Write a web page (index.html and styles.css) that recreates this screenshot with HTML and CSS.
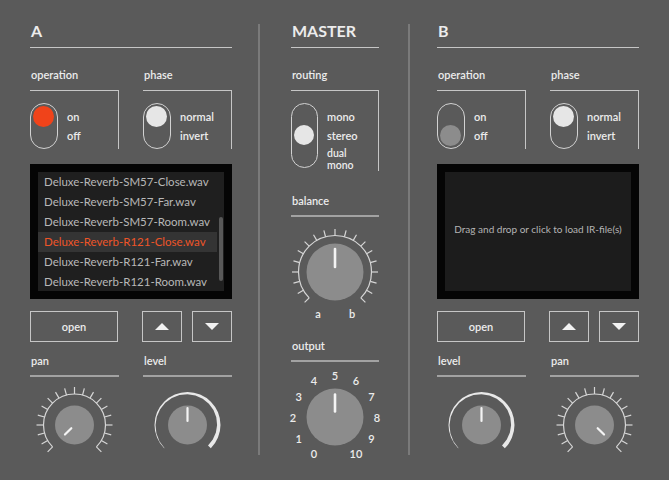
FILE: index.html
```html
<!DOCTYPE html>
<html lang="en">
<head>
  <meta charset="UTF-8" />
  <meta name="viewport" content="width=device-width, initial-scale=1.0" />
  <title>IR Loader</title>
  <link rel="stylesheet" href="styles.css">
</head>
<body>
  <div class="rack">

    <!-- channel A -->
    <section class="channel channel-a">
      <h2 class="title">A</h2>
      <div class="pair">
        <div class="group">
          <div class="label">operation</div>
          <div class="bracket">
            <div class="switch"><span class="dot dot-on"></span></div>
            <ul class="options"><li>on</li><li>off</li></ul>
          </div>
        </div>
        <div class="group">
          <div class="label">phase</div>
          <div class="bracket">
            <div class="switch"><span class="dot"></span></div>
            <ul class="options"><li>normal</li><li>invert</li></ul>
          </div>
        </div>
      </div>

      <div class="screen">
        <div class="screen-inner">
          <ul class="files">
            <li>Deluxe-Reverb-SM57-Close.wav</li>
            <li>Deluxe-Reverb-SM57-Far.wav</li>
            <li>Deluxe-Reverb-SM57-Room.wav</li>
            <li class="current">Deluxe-Reverb-R121-Close.wav</li>
            <li>Deluxe-Reverb-R121-Far.wav</li>
            <li>Deluxe-Reverb-R121-Room.wav</li>
          </ul>
          <div class="track"><div class="thumb"></div></div>
        </div>
      </div>

      <div class="pair buttons">
        <button class="btn open">open</button>
        <div class="arrows">
          <button class="btn arrow"><svg width="14" height="7" viewBox="0 0 14 7"><polygon points="7,0 14,7 0,7"/></svg></button>
          <button class="btn arrow"><svg width="14" height="7" viewBox="0 0 14 7"><polygon points="0,0 14,0 7,7"/></svg></button>
        </div>
      </div>

      <div class="pair">
        <div class="group">
          <div class="knob-label">pan</div>
          <svg class="knob" width="89" height="90" viewBox="-44.5 -45 89 90">
            <path class="scale" d="M -21.92 21.92 A 31 31 0 1 1 21.92 21.92"/>
            <g class="ticks">
              <line y1="-31" y2="-38" transform="rotate(-135)"/><line y1="-31" y2="-38" transform="rotate(-120)"/>
              <line y1="-31" y2="-38" transform="rotate(-105)"/><line y1="-31" y2="-38" transform="rotate(-90)"/>
              <line y1="-31" y2="-38" transform="rotate(-75)"/><line y1="-31" y2="-38" transform="rotate(-60)"/>
              <line y1="-31" y2="-38" transform="rotate(-45)"/><line y1="-31" y2="-38" transform="rotate(-30)"/>
              <line y1="-31" y2="-38" transform="rotate(-15)"/><line y1="-31" y2="-38"/>
              <line y1="-31" y2="-38" transform="rotate(15)"/><line y1="-31" y2="-38" transform="rotate(30)"/>
              <line y1="-31" y2="-38" transform="rotate(45)"/><line y1="-31" y2="-38" transform="rotate(60)"/>
              <line y1="-31" y2="-38" transform="rotate(75)"/><line y1="-31" y2="-38" transform="rotate(90)"/>
              <line y1="-31" y2="-38" transform="rotate(105)"/><line y1="-31" y2="-38" transform="rotate(120)"/>
              <line y1="-31" y2="-38" transform="rotate(135)"/>
            </g>
            <circle class="body" r="19.5"/>
            <line class="pointer" y1="-4.5" y2="-13.5" transform="rotate(-135)"/>
          </svg>
        </div>
        <div class="group">
          <div class="knob-label">level</div>
          <svg class="knob" width="89" height="90" viewBox="-44.5 -45 89 90">
            <path class="sweep" d="M -23.33 23.33 A 33 33 0 1 1 23.33 23.33 L 20.51 20.51 L 25.29 14.6 L 28.4 7.61 L 29.6 0 L 28.78 -7.71 L 25.98 -15 L 21.35 -21.35 L 15.2 -26.33 L 7.92 -29.56 L 0 -30.8 L -8.02 -29.94 L -15.6 -27.02 L -22.2 -22.2 L -27.37 -15.8 L -30.72 -8.23 L -32 0 L -31.1 8.33 L -28.06 16.2 L -23.05 23.05 Z"/>
            <circle class="body" r="19.5"/>
            <line class="pointer" y1="-4" y2="-17"/>
          </svg>
        </div>
      </div>
    </section>

    <div class="divider"></div>

    <!-- master -->
    <section class="master">
      <h2 class="title">MASTER</h2>
      <div class="label">routing</div>
      <div class="bracket">
        <div class="switch switch-tall"><span class="dot"></span></div>
        <ul class="options"><li>mono</li><li>stereo</li><li class="dual">dual<br>mono</li></ul>
      </div>

      <div class="knob-label knob-label-balance">balance</div>
      <svg class="knob knob-big" width="88" height="100" viewBox="-44 -50 88 100">
        <path class="scale" d="M -25.81 25.81 A 36.5 36.5 0 1 1 25.81 25.81"/>
        <g class="ticks">
          <line y1="-36.5" y2="-43" transform="rotate(-135)"/><line y1="-36.5" y2="-43" transform="rotate(-120)"/>
          <line y1="-36.5" y2="-43" transform="rotate(-105)"/><line y1="-36.5" y2="-43" transform="rotate(-90)"/>
          <line y1="-36.5" y2="-43" transform="rotate(-75)"/><line y1="-36.5" y2="-43" transform="rotate(-60)"/>
          <line y1="-36.5" y2="-43" transform="rotate(-45)"/><line y1="-36.5" y2="-43" transform="rotate(-30)"/>
          <line y1="-36.5" y2="-43" transform="rotate(-15)"/><line y1="-36.5" y2="-43"/>
          <line y1="-36.5" y2="-43" transform="rotate(15)"/><line y1="-36.5" y2="-43" transform="rotate(30)"/>
          <line y1="-36.5" y2="-43" transform="rotate(45)"/><line y1="-36.5" y2="-43" transform="rotate(60)"/>
          <line y1="-36.5" y2="-43" transform="rotate(75)"/><line y1="-36.5" y2="-43" transform="rotate(90)"/>
          <line y1="-36.5" y2="-43" transform="rotate(105)"/><line y1="-36.5" y2="-43" transform="rotate(120)"/>
          <line y1="-36.5" y2="-43" transform="rotate(135)"/>
        </g>
        <circle class="body" r="28.5"/>
        <line class="pointer pointer-thick" y1="-5" y2="-23"/>
        <text x="-17" y="41">a</text>
        <text x="17" y="41">b</text>
      </svg>

      <div class="knob-label knob-label-output">output</div>
      <svg class="knob knob-big" width="88" height="100" viewBox="-44 -50 88 100">
        <text x="-21" y="36.4">0</text>
        <text x="-36.4" y="21">1</text>
        <text x="-42" y="0">2</text>
        <text x="-36.4" y="-21">3</text>
        <text x="-21" y="-36.4">4</text>
        <text x="0" y="-42">5</text>
        <text x="21" y="-36.4">6</text>
        <text x="36.4" y="-21">7</text>
        <text x="42" y="0">8</text>
        <text x="36.4" y="21">9</text>
        <text x="21" y="36.4">10</text>
        <circle class="body" r="28.5"/>
        <line class="pointer pointer-thick" y1="-5.5" y2="-22.5"/>
      </svg>
    </section>

    <div class="divider divider-b"></div>

    <!-- channel B -->
    <section class="channel channel-b">
      <h2 class="title">B</h2>
      <div class="pair">
        <div class="group">
          <div class="label">operation</div>
          <div class="bracket">
            <div class="switch switch-off"><span class="dot dot-off"></span></div>
            <ul class="options"><li>on</li><li>off</li></ul>
          </div>
        </div>
        <div class="group">
          <div class="label">phase</div>
          <div class="bracket">
            <div class="switch"><span class="dot"></span></div>
            <ul class="options"><li>normal</li><li>invert</li></ul>
          </div>
        </div>
      </div>

      <div class="screen">
        <div class="screen-inner drop">Drag and drop or click to load IR-file(s)</div>
      </div>

      <div class="pair buttons">
        <button class="btn open">open</button>
        <div class="arrows">
          <button class="btn arrow"><svg width="14" height="7" viewBox="0 0 14 7"><polygon points="7,0 14,7 0,7"/></svg></button>
          <button class="btn arrow"><svg width="14" height="7" viewBox="0 0 14 7"><polygon points="0,0 14,0 7,7"/></svg></button>
        </div>
      </div>

      <div class="pair">
        <div class="group">
          <div class="knob-label">level</div>
          <svg class="knob" width="89" height="90" viewBox="-44.5 -45 89 90">
            <path class="sweep" d="M -23.33 23.33 A 33 33 0 1 1 23.33 23.33 L 20.51 20.51 L 25.29 14.6 L 28.4 7.61 L 29.6 0 L 28.78 -7.71 L 25.98 -15 L 21.35 -21.35 L 15.2 -26.33 L 7.92 -29.56 L 0 -30.8 L -8.02 -29.94 L -15.6 -27.02 L -22.2 -22.2 L -27.37 -15.8 L -30.72 -8.23 L -32 0 L -31.1 8.33 L -28.06 16.2 L -23.05 23.05 Z"/>
            <circle class="body" r="19.5"/>
            <line class="pointer" y1="-4" y2="-17"/>
          </svg>
        </div>
        <div class="group">
          <div class="knob-label">pan</div>
          <svg class="knob" width="89" height="90" viewBox="-44.5 -45 89 90">
            <path class="scale" d="M -21.92 21.92 A 31 31 0 1 1 21.92 21.92"/>
            <g class="ticks">
              <line y1="-31" y2="-38" transform="rotate(-135)"/><line y1="-31" y2="-38" transform="rotate(-120)"/>
              <line y1="-31" y2="-38" transform="rotate(-105)"/><line y1="-31" y2="-38" transform="rotate(-90)"/>
              <line y1="-31" y2="-38" transform="rotate(-75)"/><line y1="-31" y2="-38" transform="rotate(-60)"/>
              <line y1="-31" y2="-38" transform="rotate(-45)"/><line y1="-31" y2="-38" transform="rotate(-30)"/>
              <line y1="-31" y2="-38" transform="rotate(-15)"/><line y1="-31" y2="-38"/>
              <line y1="-31" y2="-38" transform="rotate(15)"/><line y1="-31" y2="-38" transform="rotate(30)"/>
              <line y1="-31" y2="-38" transform="rotate(45)"/><line y1="-31" y2="-38" transform="rotate(60)"/>
              <line y1="-31" y2="-38" transform="rotate(75)"/><line y1="-31" y2="-38" transform="rotate(90)"/>
              <line y1="-31" y2="-38" transform="rotate(105)"/><line y1="-31" y2="-38" transform="rotate(120)"/>
              <line y1="-31" y2="-38" transform="rotate(135)"/>
            </g>
            <circle class="body" r="19.5"/>
            <line class="pointer" y1="-4.5" y2="-13.5" transform="rotate(135)"/>
          </svg>
        </div>
      </div>
    </section>

  </div>
</body>
</html>
```

FILE: styles.css
```css
body {
  margin: 0;
  background: #5a5a5a;
  font-family: Lato, 'Liberation Sans', sans-serif;
  color: #ececec;
}

.rack {
  display: flex;
  height: 480px;
  overflow: hidden;
}

.channel {
  flex: none;
  width: 202px;
}

.channel-a {
  margin-left: 30px;
}

.channel-b {
  margin-left: 27px;
}

.master {
  flex: none;
  width: 88px;
  margin-left: 31px;
}

.divider {
  flex: none;
  width: 2px;
  height: 431px;
  margin: 24px 0 0 26px;
  background: #7a7a7a;
}

.divider-b {
  margin-left: 29px;
}

.title {
  margin: 0;
  padding: 22px 0 7px 1px;
  font-size: 16px;
  line-height: 18px;
  font-weight: 700;
  border-bottom: 1.5px solid #c6c6c6;
}

.pair {
  display: flex;
  gap: 24px;
}

.pair > .group {
  width: 89px;
}

.label {
  margin-top: 20px;
  padding-left: 1px;
  font-size: 11px;
  line-height: 14px;
  font-weight: 600;
}

.bracket {
  display: flex;
  gap: 9px;
  margin-top: 7.5px;
  padding-top: 12px;
  border-top: 1.5px solid #c6c6c6;
  border-right: 1.5px solid #c6c6c6;
}

/* toggle switches */
.switch {
  display: flex;
  flex-direction: column;
  box-sizing: border-box;
  width: 28px;
  height: 46px;
  padding: 2px;
  border: 1.5px solid #d2d2d2;
  border-radius: 14px;
}

.switch-tall {
  width: 27px;
  height: 65px;
  justify-content: center;
}

.switch-off {
  justify-content: flex-end;
}

.dot {
  display: block;
  width: 21px;
  height: 21px;
  border-radius: 50%;
  background: #e6e6e6;
}

.switch-tall .dot {
  width: 20px;
  height: 20px;
}

.dot-on {
  background: #f0431a;
}

.dot-off {
  background: #8c8c8c;
}

.options {
  list-style: none;
  margin: 0;
  padding: 4px 0 0;
  font-size: 11px;
  line-height: 19px;
  font-weight: 600;
}

.options .dual {
  margin-top: 2px;
  font-size: 10.5px;
  line-height: 12px;
}

/* file list / drop zone */
.screen {
  box-sizing: border-box;
  height: 135px;
  margin-top: 15.5px;
  padding: 8px;
  background: #050505;
}

.screen-inner {
  display: flex;
  height: 100%;
  overflow: hidden;
  background: #1f1f1f;
}

.files {
  flex: 1;
  min-width: 0;
  list-style: none;
  margin: 0;
  padding: 0;
  font-size: 11.5px;
}

.files li {
  height: 20px;
  line-height: 20px;
  padding-left: 6px;
  white-space: nowrap;
  overflow: hidden;
  color: #b8b8b8;
}

.files li.current {
  background: #343434;
  color: #ee5428;
}

.track {
  flex: none;
  box-sizing: border-box;
  width: 7px;
  padding: 45px 0 0 2px;
}

.thumb {
  width: 4px;
  height: 64px;
  border-radius: 2px;
  background: #585858;
}

.drop {
  align-items: center;
  justify-content: center;
  padding-bottom: 5px;
  box-sizing: border-box;
  background: #1c1c1c;
  font-size: 10px;
  color: #b4b4b4;
}

/* buttons */
.buttons {
  margin-top: 12px;
}

.btn {
  display: flex;
  align-items: center;
  justify-content: center;
  box-sizing: border-box;
  height: 31px;
  padding: 0;
  border: 1.5px solid #c6c6c6;
  background: transparent;
  color: #ececec;
  font-family: inherit;
  font-size: 11px;
  font-weight: 600;
}

.open {
  width: 88px;
}

.arrows {
  display: flex;
  gap: 10px;
}

.arrow {
  width: 40px;
}

.arrow polygon {
  fill: #f2f2f2;
}

/* knobs */
.knob-label {
  margin-top: 12px;
  padding: 0 0 7px 1px;
  font-size: 11px;
  line-height: 14px;
  font-weight: 600;
  border-bottom: 2px solid #a2a2a2;
}

.knob-label-balance {
  margin-top: 23.5px;
}

.knob-label-output {
  margin-top: 17px;
}

.knob {
  display: block;
  margin-top: 3px;
  overflow: visible;
}

.knob-big {
  margin-top: 5px;
}

.knob .scale {
  fill: none;
  stroke: #d6d6d6;
  stroke-width: 1.2;
}

.knob .ticks line {
  stroke: #d6d6d6;
  stroke-width: 1.2;
}

.knob .sweep {
  fill: #e8e8e8;
}

.knob .body {
  fill: #8c8c8c;
}

.knob .pointer {
  stroke: #f4f4f4;
  stroke-width: 2.2;
  stroke-linecap: round;
}

.knob .pointer-thick {
  stroke-width: 2.6;
}

.knob text {
  fill: #ececec;
  font-size: 11px;
  font-weight: 600;
  text-anchor: middle;
  dominant-baseline: central;
}
```
